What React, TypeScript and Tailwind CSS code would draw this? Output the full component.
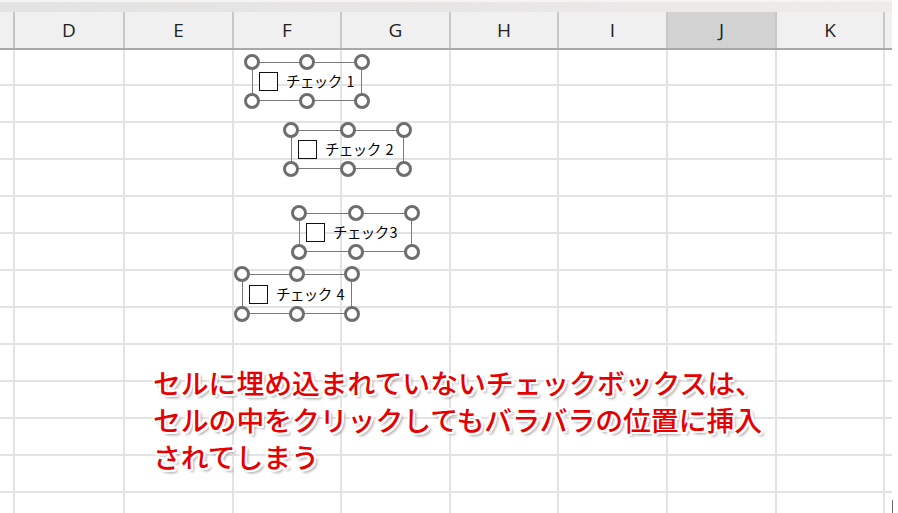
import React from "react";

const columns = [
  { label: "D", w: "w-[110px]" },
  { label: "E", w: "w-[109px]" },
  { label: "F", w: "w-[108px]" },
  { label: "G", w: "w-[109px]" },
  { label: "H", w: "w-[108px]" },
  { label: "I", w: "w-[109px]" },
  { label: "J", w: "w-[109px]", selected: true },
  { label: "K", w: "w-[108px]" },
];

const rowCount = 13;

type CheckProps = {
  left: number;
  top: number;
  width: number;
  height: number;
  num: string;
  spaced?: boolean;
};

// floating form control with its selection handles (top and bottom only)
const FloatingCheck = ({ left, top, width, height, num, spaced = true }: CheckProps) => {
  const handle =
    "absolute w-[16px] h-[16px] -ml-[8px] -mt-[8px] rounded-full border-[3px] border-[#6e6e6e] bg-white";
  return (
    <div className="absolute" style={{ left, top, width, height }}>
      <div className="absolute inset-0 border-[1.5px] border-[#7a7a7a] flex items-center pl-[6px] gap-[8px]">
        <div className="w-[19px] h-[19px] border-[1.5px] border-[#111] bg-white" />
        <span className="text-[14.5px] tracking-[-0.6px] text-black leading-none whitespace-pre font-['Noto_Sans_CJK_JP',sans-serif]">
          チェック<span className={spaced ? "ml-[5px]" : "ml-[1px]"}>{num}</span>
        </span>
      </div>
      <div className={`${handle} left-0 top-0`} />
      <div className={`${handle} left-1/2 top-0`} />
      <div className={`${handle} left-full top-0`} />
      <div className={`${handle} left-0 top-full`} />
      <div className={`${handle} left-1/2 top-full`} />
      <div className={`${handle} left-full top-full`} />
    </div>
  );
};

export default function App() {
  return (
    <div className="relative w-[898px] h-[513px] overflow-hidden bg-white font-['Open_Sans','Liberation_Sans',sans-serif]">
      {/* ribbon edge */}
      <div className="h-[12px] w-[892px] border-t-[2px] border-[#f4f4f4] bg-gradient-to-r from-[#e3e3e3] via-[#e8e6e5] to-[#efebe8]" />

      {/* column header */}
      <div className="flex h-[38px] w-[892px] bg-[#f0f0f0] border-b-[2px] border-[#a9a9a9]">
        <div className="w-[15px] shrink-0 border-r-[2px] border-[#c4c4c4]" />
        {columns.map((c) => (
          <div
            key={c.label}
            className={`${c.w} shrink-0 flex items-center justify-center border-r-[2px] border-[#c8c8c8] text-[19px] text-[#222] ${
              c.selected ? "bg-[#d2d2d2]" : ""
            }`}
          >
            {c.label}
          </div>
        ))}
        <div className="flex-1" />
      </div>

      {/* cells */}
      <div className="w-[892px]">
        {Array.from({ length: rowCount }).map((_, r) => (
          <div
            key={r}
            className={`flex border-b-[2px] border-[#e3e3e3] ${r === 0 ? "h-[36px]" : "h-[37px]"}`}
          >
            <div className="w-[15px] shrink-0 border-r-[2px] border-[#e3e3e3]" />
            {columns.map((c) => (
              <div key={c.label} className={`${c.w} shrink-0 border-r-[2px] border-[#e3e3e3]`} />
            ))}
            <div className="flex-1" />
          </div>
        ))}
      </div>
      <div className="absolute left-[892px] top-[500px] w-[1px] h-[13px] bg-[#6a6a6a]" />

      <FloatingCheck left={252} top={62} width={110} height={39} num="1" />
      <FloatingCheck left={291} top={130} width={113} height={39} num="2" />
      <FloatingCheck left={299} top={213} width={113} height={39} num="3" spaced={false} />
      <FloatingCheck left={242} top={274} width={110} height={40} num="4" />

      {/* annotation */}
      <div className="absolute left-[153px] top-[364px] text-[27.8px] leading-[37px] font-medium text-[#e60000] whitespace-nowrap font-['Noto_Sans_CJK_JP',sans-serif] [text-shadow:2px_0_0_#fff,-2px_0_0_#fff,0_2px_0_#fff,0_-2px_0_#fff,2px_2px_0_#fff,-2px_-2px_0_#fff,2px_-2px_0_#fff,-2px_2px_0_#fff,3px_3px_3px_#9a9a9a]">
        <div>セルに埋め込まれていないチェックボックスは、</div>
        <div>セルの中をクリックしてもバラバラの位置に挿入</div>
        <div>されてしまう</div>
      </div>
    </div>
  );
}
